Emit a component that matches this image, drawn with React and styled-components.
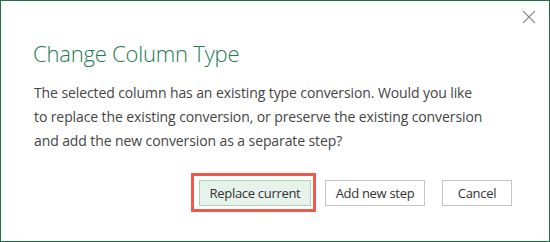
import React from "react";
import styled, { createGlobalStyle } from "styled-components";

const GlobalStyle = createGlobalStyle`
  html, body {
    margin: 0;
    padding: 0;
    background: #ffffff;
  }
  body {
    font-family: "Open Sans", "Noto Sans", sans-serif;
  }
`;

const Dialog = styled.div`
  box-sizing: border-box;
  width: 550px;
  height: 242px;
  border: 1px solid #1f7145;
  background: #ffffff;
  display: flex;
  flex-direction: column;
`;

const TopBar = styled.div`
  height: 37px;
  display: flex;
  justify-content: flex-end;
  align-items: flex-start;
  padding: 9px 13px 0 0;
  box-sizing: border-box;
`;

const CloseButton = styled.button`
  width: 14px;
  height: 14px;
  padding: 0;
  border: none;
  background: transparent;
  cursor: pointer;
  svg {
    display: block;
  }
`;

const Title = styled.h1`
  margin: 0 0 0 32px;
  font-family: "Open Sans", "Noto Sans", sans-serif;
  font-weight: 300;
  font-size: 22px;
  line-height: 30px;
  letter-spacing: -0.2px;
  color: #247a52;
`;

const Message = styled.p`
  margin: 13px 0 0 33px;
  font-size: 14px;
  line-height: 24px;
  letter-spacing: -0.1px;
  color: #444444;
`;

const Footer = styled.div`
  margin-top: 20px;
  padding-right: 37px;
  display: flex;
  justify-content: flex-end;
  align-items: center;
  gap: 17px;
`;

const Highlight = styled.div`
  border: 3px solid #f2594b;
  padding: 4px 2px 3px 5px;
  margin-right: -8px;
  display: flex;
`;

const Button = styled.button`
  box-sizing: border-box;
  width: ${(p) => p.$width}px;
  height: 26px;
  padding: 0;
  font-family: "Open Sans", "Noto Sans", sans-serif;
  font-size: 13px;
  letter-spacing: -0.3px;
  color: #333333;
  background: ${(p) => (p.$primary ? "#e6f2ea" : "#ffffff")};
  border: 1px solid ${(p) => (p.$primary ? "#a9d5b8" : "#c6c6c6")};
  cursor: pointer;
`;

const CloseIcon = () => (
  <svg width="14" height="14" viewBox="0 0 14 14">
    <path d="M1 1 L13 13 M13 1 L1 13" stroke="#8a8a8a" strokeWidth="1.1" fill="none" />
  </svg>
);

export default function App() {
  return (
    <>
      <GlobalStyle />
      <Dialog>
        <TopBar>
          <CloseButton aria-label="Close">
            <CloseIcon />
          </CloseButton>
        </TopBar>
        <Title>Change Column Type</Title>
        <Message>
          The selected column has an existing type conversion. Would you like
          <br />
          to replace the existing conversion, or preserve the existing conversion
          <br />
          and add the new conversion as a separate step?
        </Message>
        <Footer>
          <Highlight>
            <Button $primary $width={112}>Replace current</Button>
          </Highlight>
          <Button $width={100}>Add new step</Button>
          <Button $width={70}>Cancel</Button>
        </Footer>
      </Dialog>
    </>
  );
}
